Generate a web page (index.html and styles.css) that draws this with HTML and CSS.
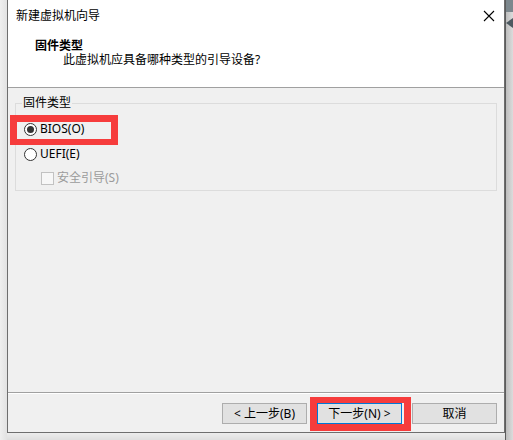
FILE: index.html
```html
<!DOCTYPE html>
<html lang="zh-CN">
<head>
<meta charset="utf-8">
<title>新建虚拟机向导</title>
<link rel="stylesheet" href="styles.css">
</head>
<body>
<div class="screen">
  <div class="shadow-left"></div>
  <div class="window">
    <div class="titlebar">
      <span class="title">新建虚拟机向导</span>
      <svg class="close" width="12" height="12" viewBox="0 0 12 12"><path d="M1 1 L11 11 M11 1 L1 11" stroke="#000" stroke-width="1.1" fill="none"/></svg>
    </div>
    <div class="header">
      <div class="h-title">固件类型</div>
      <div class="h-sub">此虚拟机应具备哪种类型的引导设备?</div>
    </div>
    <div class="content">
      <fieldset class="group">
        <legend>固件类型</legend>
        <div class="row row1"><span class="radio checked"></span><span>BIOS(O)</span></div>
        <div class="row row2"><span class="radio"></span><span>UEFI(E)</span></div>
        <div class="row row3 disabled"><span class="check"></span><span>安全引导(S)</span></div>
      </fieldset>
    </div>
    <div class="footer">
      <button class="btn">&lt; 上一步(B)</button>
      <button class="btn default">下一步(N) &gt;</button>
      <button class="btn">取消</button>
    </div>
    <div class="mark mark-bios"></div>
    <div class="mark mark-next"></div>
  </div>
  <div class="side">
    <div class="side-top"></div>
    <div class="side-icon"></div>
  </div>
</div>
</body>
</html>
```
FILE: styles.css
```css
* { box-sizing: border-box; }
html, body { margin: 0; padding: 0; }
body {
  background: #e4e4e4;
  font-family: "Noto Sans", "Noto Sans CJK SC", sans-serif;
  font-size: 12px;
  color: #000;
  width: 513px;
  height: 440px;
  overflow: hidden;
}
.screen {
  display: flex;
  height: 440px;
  background: linear-gradient(to bottom, #ececec 0, #ececec 433px, #dedede 440px);
}
.shadow-left {
  width: 7px;
  background: linear-gradient(to right, #efefef, #e2e2e2);
}
.window {
  position: relative;
  width: 498px;
  height: 433px;
  border: 1px solid #6e6e6e;
  border-top: none;
  background: #f0f0f0;
  display: flex;
  flex-direction: column;
}
.titlebar {
  height: 32px;
  background: #fff;
  display: flex;
  align-items: center;
  justify-content: space-between;
  padding: 0 9px 0 8px;
  line-height: 32px;
}
.close { margin-top: -1px; }
.header {
  height: 56px;
  background: #fff;
  border-bottom: 1px solid #a0a0a0;
  padding-top: 7px;
  line-height: 14px;
}
.h-title { font-weight: bold; padding-left: 27px; }
.h-sub { padding-left: 55px; }
.content {
  height: 305px;
  border-bottom: 1px solid #a0a0a0;
  padding-top: 7px;
}
.group {
  margin: 0 7px;
  padding: 0 0 4px 8px;
  border: 1px solid #dcdcdc;
  min-width: 0;
}
.group legend {
  margin-left: 6px;
  padding: 0 1px 0 1px;
  line-height: 16px;
  margin-left: -2px;
}
.row {
  display: flex;
  align-items: center;
  height: 16px;
  line-height: 16px;
}
.row1 { margin-top: 10px; }
.row2 { margin-top: 9px; }
.row3 { margin-top: 8px; padding-left: 17px; }
.radio {
  width: 13px;
  height: 13px;
  border: 1px solid #333;
  border-radius: 50%;
  background: #fff;
  margin-right: 3px;
  display: flex;
  align-items: center;
  justify-content: center;
}
.radio.checked::after {
  content: "";
  width: 7px;
  height: 7px;
  border-radius: 50%;
  background: #333;
}
.check {
  width: 13px;
  height: 13px;
  border: 1px solid #c2c2c2;
  background: #f7f7f7;
  margin-right: 3px;
}
.disabled { color: #9b9b9b; }
.footer {
  flex: 1;
  border-top: 1px solid #fff;
  display: flex;
  justify-content: flex-end;
  gap: 10px;
  padding: 9px 7px 0 0;
}
.btn {
  width: 85px;
  height: 21px;
  background: #e1e1e1;
  border: 1px solid #adadad;
  font-family: "Noto Sans", "Noto Sans CJK SC", sans-serif;
  font-size: 12px;
  line-height: 17px;
  padding: 0;
  color: #000;
}
.btn.default { border-color: #0078d7; }
.mark {
  position: absolute;
  border: 7px solid #f63c3c;
}
.mark-bios {
  left: 2px;
  top: 115px;
  width: 108px;
  height: 30px;
  border-bottom-width: 6px;
}
.mark-next {
  left: 302px;
  top: 397px;
  width: 101px;
  height: 34px;
  border-top-width: 6px;
}
.side {
  flex: 1;
  background: linear-gradient(to right, #bdbdbd, #dcdcdc);
  border-left: 1px solid #5c5c5c;
  display: flex;
  flex-direction: column;
}
.side-top { height: 12px; background: #7c878d; }
.side-icon {
  margin-top: 6px;
  width: 7px;
  height: 10px;
  background: #4d5960;
  clip-path: polygon(100% 0, 0 50%, 100% 100%);
}
```
